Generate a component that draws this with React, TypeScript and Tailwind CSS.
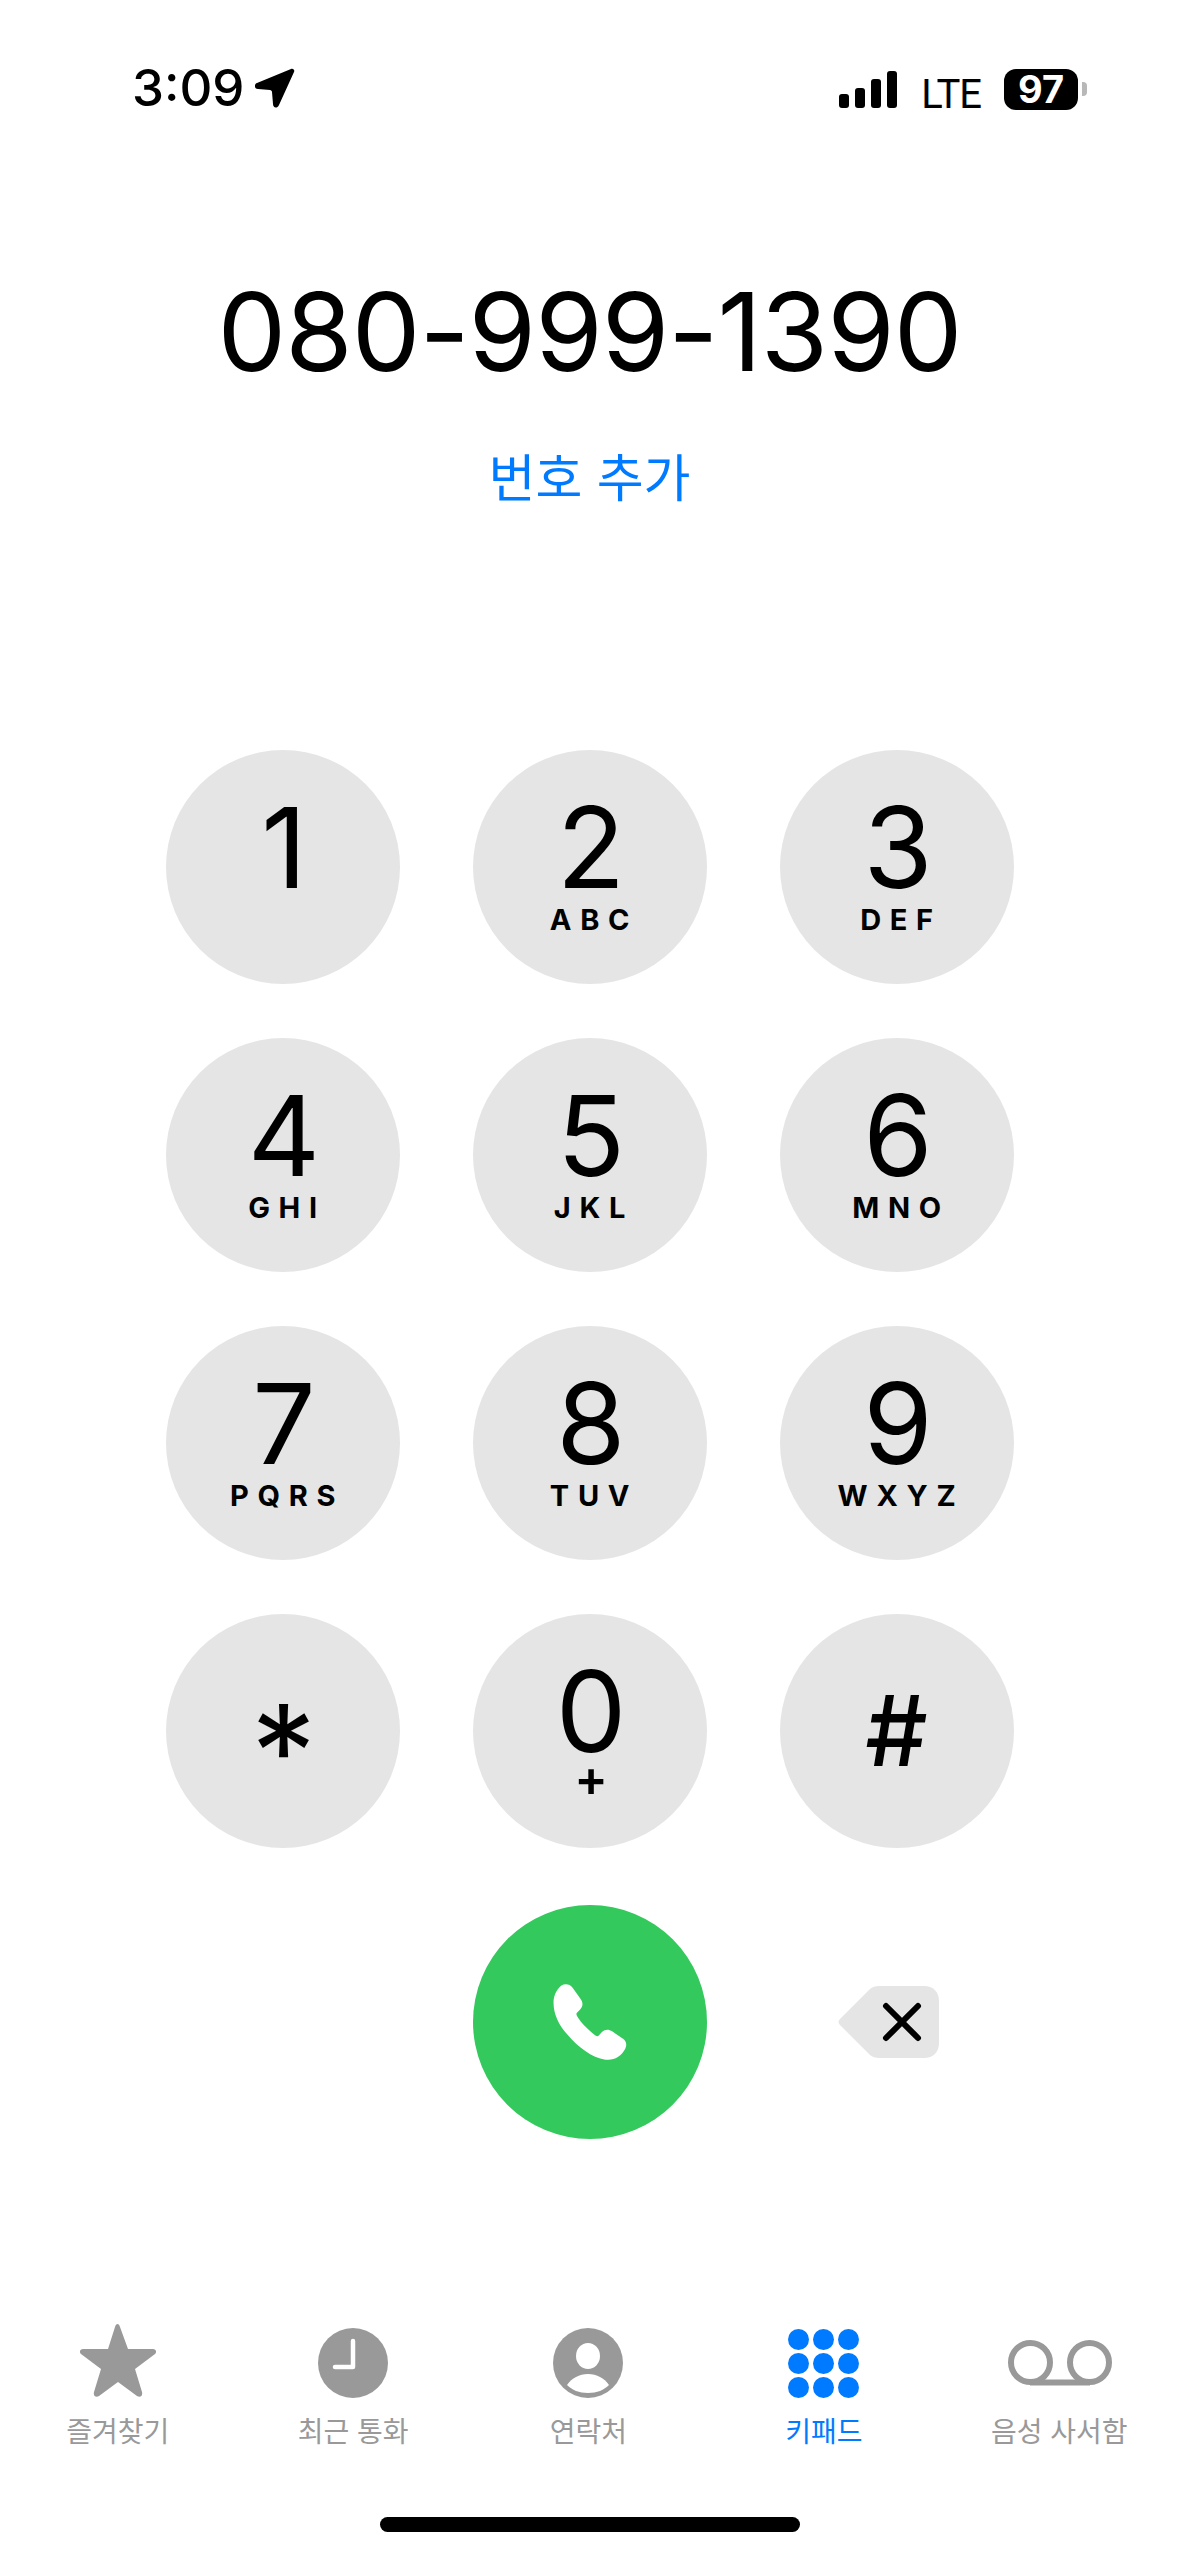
import React from 'react';

const keys = [
  { digit: '1', letters: '' },
  { digit: '2', letters: 'ABC' },
  { digit: '3', letters: 'DEF' },
  { digit: '4', letters: 'GHI' },
  { digit: '5', letters: 'JKL' },
  { digit: '6', letters: 'MNO' },
  { digit: '7', letters: 'PQRS' },
  { digit: '8', letters: 'TUV' },
  { digit: '9', letters: 'WXYZ' },
];

const fontInter = "font-['Inter','Noto_Sans_CJK_KR',sans-serif]";

const StatusBar = () => (
  <div className="flex h-[110px] items-start justify-between pl-[132px] pr-[92px] pt-[60px]">
    <div className="flex items-center">
      <span className="text-[51px] leading-[56px] font-medium text-black">3:09</span>
      <svg width="40" height="40" viewBox="0 0 40 40" className="ml-[11px]">
        <path
          d="M36 1 C38 0 40 2 39 4 L24 37 C22 41 18 40 18 36 L17 24 C17 23 16 22 15 22 L3 21 C-1 21 -1 16 2 15 Z"
          fill="black"
        />
      </svg>
    </div>
    <div className="mt-[3px] flex items-center">
      <div className="flex h-[38px] items-end gap-[6px]">
        <div className="h-[14px] w-[10px] rounded-[3px] bg-black" />
        <div className="h-[20px] w-[10px] rounded-[3px] bg-black" />
        <div className="h-[29px] w-[10px] rounded-[3px] bg-black" />
        <div className="h-[37px] w-[10px] rounded-[3px] bg-black" />
      </div>
      <span className="ml-[24px] mt-[12px] text-[40px] leading-[40px] font-['Roboto',sans-serif] font-normal tracking-[-1px] text-black">LTE</span>
      <div className="ml-[23px] flex items-center">
        <div className="flex h-[41px] w-[74px] items-center justify-center rounded-[12px] bg-black">
          <span className="text-[38px] leading-[40px] font-bold text-white">97</span>
        </div>
        <div className="ml-[4px] h-[14px] w-[5px] rounded-r-[4px] bg-[#b8b8b8]" />
      </div>
    </div>
  </div>
);

const Key = ({ digit, letters }: { digit: string; letters: string }) => (
  <button className="flex h-[234px] w-[234px] flex-col items-center rounded-full bg-[#e5e5e5] pt-[47px] text-black">
    <span className="pl-[3px] text-[112px] leading-[100px] font-normal">{digit}</span>
    <span className="mt-[9px] pl-[9px] text-[29px] leading-[28px] font-bold tracking-[0.3em]">{letters}</span>
  </button>
);

const DialPad = () => (
  <div className="mt-[241px] grid grid-cols-[repeat(3,234px)] justify-center gap-x-[73px] gap-y-[54px]">
    {keys.map((k) => (
      <Key key={k.digit} digit={k.digit} letters={k.letters} />
    ))}
    <button className="flex h-[234px] w-[234px] items-center justify-center rounded-full bg-[#e5e5e5] text-black">
      <span className="mt-[42px] pl-[2px] text-[130px] leading-[130px] font-normal">*</span>
    </button>
    <button className="flex h-[234px] w-[234px] flex-col items-center rounded-full bg-[#e5e5e5] pt-[47px] text-black">
      <span className="pl-[3px] text-[112px] leading-[100px] font-normal">0</span>
      <span className="mt-[-3px] pl-[3px] text-[50px] leading-[40px] font-semibold">+</span>
    </button>
    <button className="flex h-[234px] w-[234px] items-center justify-center rounded-full bg-[#e5e5e5] text-black">
      <span className="text-[98px] leading-[100px] font-medium">#</span>
    </button>
    <div />
    <button className="mt-[3px] flex h-[234px] w-[234px] items-center justify-center rounded-full bg-[#34c95c]">
      <svg width="74" height="76" viewBox="327 315 216 223">
        <path
          d="M350 320 C362 313 376 315 384 326 L408 360 C416 372 414 382 404 392 L396 400 C394 404 396 408 400 414 C410 430 425 444 440 457 C450 466 456 470 460 467 L470 456 C480 447 490 447 500 454 L532 476 C542 484 544 494 538 506 C525 530 505 540 480 537 C440 532 400 500 370 465 C345 438 328 405 328 370 C328 350 336 332 350 320 Z"
          fill="white"
        />
      </svg>
    </button>
    <div className="mt-[3px] flex h-[234px] w-[234px] items-center justify-center">
      <svg width="102" height="74" viewBox="0 0 102 74" className="mr-[16px]">
        <path
          d="M32 4 C34 2 38 1 41 1 L86 1 C95 1 101 7 101 16 L101 58 C101 67 95 73 86 73 L41 73 C38 73 34 72 32 70 L2 40 C0 38 0 36 2 34 Z"
          fill="#e5e5e5"
        />
        <path d="M48 21 L80 53 M80 21 L48 53" stroke="black" strokeWidth="6" strokeLinecap="round" />
      </svg>
    </div>
  </div>
);

const TabItem = ({ label, active, children }: { label: string; active?: boolean; children: React.ReactNode }) => (
  <div className="flex flex-col items-center">
    <div className="flex h-[76px] items-center justify-center">{children}</div>
    <span className={`mt-[13px] text-[28px] leading-[36px] ${active ? 'text-[#007aff]' : 'text-[#999999]'}`}>{label}</span>
  </div>
);

const TabBar = () => (
  <div className="mt-auto grid grid-cols-5 pr-[2px]">
    <TabItem label="즐겨찾기">
      <svg width="76" height="74" viewBox="0 0 76 74" className="mb-[4px]">
        <path
          d="M35 3 C36 -1 39 -1 40 3 L48 25 L73 25 C76 25 77 28 75 30 L55 45 L62 68 C63 72 60 74 57 72 L38 58 L19 72 C16 74 13 72 14 68 L21 45 L1 30 C-1 28 0 25 3 25 L28 25 Z"
          fill="#999999"
        />
      </svg>
    </TabItem>
    <TabItem label="최근 통화">
      <svg width="70" height="70" viewBox="0 0 70 70">
        <circle cx="35" cy="35" r="35" fill="#999999" />
        <path d="M35 13 L35 39 L17 39" stroke="white" strokeWidth="4.5" strokeLinecap="round" strokeLinejoin="round" fill="none" />
      </svg>
    </TabItem>
    <TabItem label="연락처">
      <svg width="70" height="70" viewBox="0 0 70 70">
        <circle cx="35" cy="35" r="35" fill="#999999" />
        <ellipse cx="35" cy="28" rx="12" ry="13" fill="white" />
        <path d="M14 57 C19 50 26 46 35 46 C44 46 51 50 56 57 C51 62 44 65 35 65 C26 65 19 62 14 57 Z" fill="white" />
      </svg>
    </TabItem>
    <TabItem label="키패드" active>
      <div className="grid grid-cols-3 gap-x-[4px] gap-y-[3px]">
        {[1, 2, 3, 4, 5, 6, 7, 8, 9].map((n) => (
          <div key={n} className="h-[21px] w-[21px] rounded-full bg-[#007aff]" />
        ))}
      </div>
    </TabItem>
    <TabItem label="음성 사서함">
      <svg width="104" height="46" viewBox="0 0 104 46" className="ml-[2px]">
        <circle cx="22.5" cy="22.5" r="19.5" stroke="#999999" strokeWidth="6" fill="none" />
        <circle cx="81.5" cy="22.5" r="19.5" stroke="#999999" strokeWidth="6" fill="none" />
        <path d="M22 42.5 L82 42.5" stroke="#999999" strokeWidth="6" />
      </svg>
    </TabItem>
  </div>
);

export default function App() {
  return (
    <div className={`flex h-[2556px] w-[1179px] flex-col overflow-hidden bg-white ${fontInter}`}>
      <StatusBar />
      <div className="mt-[161px] flex flex-col items-center">
        <div className="text-[109px] leading-[120px] font-normal tracking-[-1px] text-black">080-999-1390</div>
        <div className="mt-[58px] text-[51px] leading-[60px] text-[#007aff]">번호 추가</div>
      </div>
      <DialPad />
      <TabBar />
      <div className="mb-[24px] mt-[67px] flex justify-center">
        <div className="h-[15px] w-[420px] rounded-full bg-black" />
      </div>
    </div>
  );
}
